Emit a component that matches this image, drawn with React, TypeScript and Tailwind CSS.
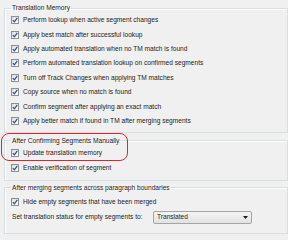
import React from "react";

function Check() {
  return (
    <span className="inline-flex w-[8px] h-[8px] shrink-0 border border-[#8e8f8f] bg-gradient-to-br from-[#dcdcdc] to-[#ffffff] items-center justify-center">
      <svg width="6" height="6" viewBox="0 0 6 6">
        <path d="M0.8 3.1 L2.4 4.8 L5.3 0.9" fill="none" stroke="#2c4c98" strokeWidth="1.2" />
      </svg>
    </span>
  );
}

function Row({ label }: { label: string }) {
  return (
    <div className="h-[14.4px] flex items-center gap-[4px]">
      <Check />
      <span className="whitespace-nowrap">{label}</span>
    </div>
  );
}

const tm = [
  "Perform lookup when active segment changes",
  "Apply best match after successful lookup",
  "Apply automated translation when no TM match is found",
  "Perform automated translation lookup on confirmed segments",
  "Turn off Track Changes when applying TM matches",
  "Copy source when no match is found",
  "Confirm segment after applying an exact match",
  "Apply better match if found in TM after merging segments",
];

export default function App() {
  return (
    <div
      className="relative w-[288px] h-[240px] overflow-hidden bg-[#f0f0f0] text-[#1c1c1c] text-[6.6px] pl-[4px]"
      style={{ fontFamily: '"Liberation Sans", Arial, sans-serif' }}
    >
      <fieldset className="mt-[3px] border border-[#d5dfe5] shadow-[inset_1px_1px_0_#ffffff] pl-[6px] pb-[3.5px]">
        <legend className="leading-[10px] px-[1px]">Translation Memory</legend>
        {tm.map((t) => (
          <Row key={t} label={t} />
        ))}
      </fieldset>

      <fieldset className="mt-[3.3px] border border-[#d5dfe5] shadow-[inset_1px_1px_0_#ffffff] pl-[6px] pb-[5px]">
        <legend className="leading-[10px] px-[1px]">After Confirming Segments Manually</legend>
        <Row label="Update translation memory" />
        <Row label="Enable verification of segment" />
      </fieldset>

      <fieldset className="mt-[2.2px] border border-[#d5dfe5] shadow-[inset_1px_1px_0_#ffffff] pl-[6px] pt-[1.8px] pb-[7.5px]">
        <legend className="leading-[10px] px-[1px]">After merging segments across paragraph boundaries</legend>
        <Row label="Hide empty segments that have been merged" />
        <div className="h-[16px] flex items-center">
          <span className="w-[142px] pl-[1px] whitespace-nowrap">Set translation status for empty segments to:</span>
          <div className="w-[99px] h-[13px] flex items-center justify-between border border-[#a5a5a5] rounded-[2px] bg-gradient-to-b from-[#f4f4f4] to-[#e2e2e2] pl-[3px] pr-[3px]">
            <span>Translated</span>
            <svg width="5" height="3" viewBox="0 0 5 3">
              <path d="M0 0 L5 0 L2.5 3 Z" fill="#1a1a1a" />
            </svg>
          </div>
        </div>
      </fieldset>

      <div className="absolute left-[1px] top-[133px] w-[127px] h-[28px] border-[1.5px] border-[#e0262d] rounded-[8px] pointer-events-none" />
    </div>
  );
}
